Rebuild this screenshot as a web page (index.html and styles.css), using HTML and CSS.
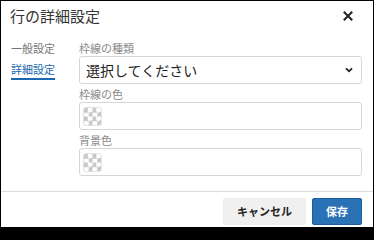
FILE: index.html
```html
<!DOCTYPE html>
<html lang="ja">
<head>
<meta charset="utf-8">
<title>行の詳細設定</title>
<link rel="stylesheet" href="styles.css">
</head>
<body>
<div class="dialog">
  <div class="dialog-header">
    <h1 class="dialog-title">行の詳細設定</h1>
    <button class="close-btn" aria-label="閉じる">
      <svg width="10" height="10" viewBox="0 0 10 10"><path d="M1.5 1.5 L8.5 8.5 M8.5 1.5 L1.5 8.5" stroke="#222" stroke-width="2" stroke-linecap="square" fill="none"/></svg>
    </button>
  </div>
  <div class="dialog-body">
    <nav class="side-nav">
      <span class="nav-item">一般設定</span>
      <span class="nav-item active">詳細設定</span>
    </nav>
    <div class="form">
      <div class="field">
        <div class="field-label">枠線の種類</div>
        <div class="select-box">
          <span class="select-text">選択してください</span>
          <svg class="chevron" width="8" height="6" viewBox="0 0 8 6"><path d="M1 1.3 L4 4.3 L7 1.3" stroke="#222" stroke-width="1.8" fill="none"/></svg>
        </div>
      </div>
      <div class="field">
        <div class="field-label">枠線の色</div>
        <div class="color-box"><span class="swatch"></span></div>
      </div>
      <div class="field">
        <div class="field-label">背景色</div>
        <div class="color-box"><span class="swatch"></span></div>
      </div>
    </div>
  </div>
  <div class="dialog-footer">
    <button class="btn btn-cancel">キャンセル</button>
    <button class="btn btn-save">保存</button>
  </div>
</div>
</body>
</html>
```
FILE: styles.css
```css
html {
  background: #000;
}
body {
  margin: 0;
  font-family: "Noto Sans CJK JP", "Noto Sans", sans-serif;
}
.dialog {
  margin: 1px 1px 0 1px;
  width: 372px;
  height: 226px;
  background: #fff;
  display: flex;
  flex-direction: column;
  box-sizing: border-box;
}
.dialog-header {
  height: 30px;
  display: flex;
  align-items: center;
  justify-content: space-between;
  padding: 0 20px 0 9px;
}
.dialog-title {
  margin: 0;
  font-size: 15px;
  font-weight: normal;
  color: #333;
  line-height: 20px;
}
.close-btn {
  border: 0;
  background: none;
  padding: 0;
  width: 10px;
  height: 10px;
  display: flex;
}
.dialog-body {
  flex: 1;
  display: grid;
  grid-template-columns: 68px 1fr;
  padding: 10px 11px 0 10px;
}
.side-nav {
  display: flex;
  flex-direction: column;
  align-items: flex-start;
  gap: 3px;
}
.nav-item {
  font-size: 11px;
  line-height: 15px;
  color: #777;
  padding-bottom: 1px;
  border-bottom: 2px solid transparent;
}
.nav-item.active {
  color: #1a68b0;
  border-bottom-color: #1a68b0;
}
.form {
  display: flex;
  flex-direction: column;
  gap: 3px;
}
.field-label {
  font-size: 11px;
  line-height: 15px;
  color: #8a8a8a;
}
.select-box,
.color-box {
  height: 28px;
  box-sizing: border-box;
  border: 1px solid #d6d6d6;
  border-radius: 3px;
  display: flex;
  align-items: center;
}
.select-box {
  justify-content: space-between;
  padding: 0 8px 0 6px;
}
.select-text {
  font-size: 14px;
  color: #222;
  line-height: 20px;
}
.color-box {
  padding-left: 3px;
}
.swatch {
  width: 19px;
  height: 19px;
  box-sizing: border-box;
  border: 1px solid #e2e2e2;
  border-radius: 3px;
  background: repeating-conic-gradient(#fff 0 25%, #c8c8c8 0 50%) 0 0 / 8.5px 8.5px;
}
.dialog-footer {
  border-top: 1px solid #dcdcdc;
  padding: 6px 11px 2px;
  display: flex;
  justify-content: flex-end;
  gap: 6px;
}
.btn {
  height: 27px;
  font-family: "Noto Sans CJK JP", "Noto Sans", sans-serif;
  font-size: 11px;
  font-weight: bold;
  border-radius: 2px;
  padding: 0 13px;
  line-height: 25px;
}
.btn-cancel {
  background: #f0f0f0;
  border: 1px solid #ececec;
  color: #222;
}
.btn-save {
  background: #2a72b5;
  border: 1px solid #1d5e9c;
  color: #fff;
}
```
